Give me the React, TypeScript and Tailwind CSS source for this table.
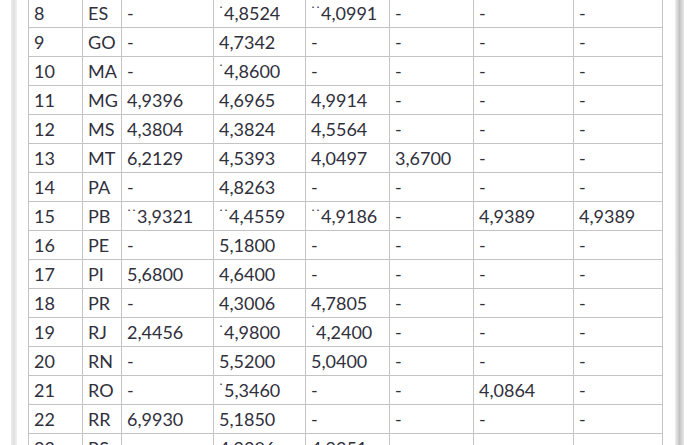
import React from 'react';

type Row = [string, string, ...string[]];

// '*' prefix = one mark, '**' = two marks, shown as small raised dots
const rows: Row[] = [
  ['8', 'ES', '-', '*4,8524', '**4,0991', '-', '-', '-'],
  ['9', 'GO', '-', '4,7342', '-', '-', '-', '-'],
  ['10', 'MA', '-', '*4,8600', '-', '-', '-', '-'],
  ['11', 'MG', '4,9396', '4,6965', '4,9914', '-', '-', '-'],
  ['12', 'MS', '4,3804', '4,3824', '4,5564', '-', '-', '-'],
  ['13', 'MT', '6,2129', '4,5393', '4,0497', '3,6700', '-', '-'],
  ['14', 'PA', '-', '4,8263', '-', '-', '-', '-'],
  ['15', 'PB', '**3,9321', '**4,4559', '**4,9186', '-', '4,9389', '4,9389'],
  ['16', 'PE', '-', '5,1800', '-', '-', '-', '-'],
  ['17', 'PI', '5,6800', '4,6400', '-', '-', '-', '-'],
  ['18', 'PR', '-', '4,3006', '4,7805', '-', '-', '-'],
  ['19', 'RJ', '2,4456', '*4,9800', '*4,2400', '-', '-', '-'],
  ['20', 'RN', '-', '5,5200', '5,0400', '-', '-', '-'],
  ['21', 'RO', '-', '*5,3460', '-', '-', '4,0864', '-'],
  ['22', 'RR', '6,9930', '5,1850', '-', '-', '-', '-'],
  ['23', 'RS', '-', '4,9306', '4,9351', '-', '-', '-'],
];

const widths = ['w-[54px]', 'w-[39px]', 'w-[92px]', 'w-[92px]', 'w-[84px]', 'w-[84px]', 'w-[100px]', 'w-[89px]'];

const Cell = ({ value }: { value: string }) => {
  const m = value.match(/^(\*+)(.*)$/);
  if (!m) return <>{value}</>;
  return (
    <>
      <span className="relative -top-[6px] text-[10px] font-bold tracking-[1px]">{m[1].replace(/\*/g, '˙')}</span>
      {m[2]}
    </>
  );
};

export default function App() {
  return (
    <div className="w-[692px] h-[445px] overflow-hidden bg-white flex font-['Lato',sans-serif] text-[#30303c]">
      <div className="w-[11px] shrink-0" />
      <div className="w-[6px] shrink-0 bg-gradient-to-r from-[#ececec] via-[#e0e0e0] to-[#f2f2f2]" />
      <div className="w-[11px] shrink-0" />
      <div className="w-[634px] shrink-0 -mt-[2px]">
        <table className="w-full table-fixed border-collapse text-[18px] leading-none">
          <colgroup>
            {widths.map((w, i) => (
              <col key={i} className={w} />
            ))}
          </colgroup>
          <tbody>
            {rows.map(r => (
              <tr key={r[0]} className="h-[29px]">
                {r.map((v, i) => (
                  <td key={i} className="border border-[#c4c4c4] px-[5px] whitespace-nowrap">
                    <Cell value={v} />
                  </td>
                ))}
              </tr>
            ))}
          </tbody>
        </table>
      </div>
      <div className="w-[13px] shrink-0" />
      <div className="w-[9px] shrink-0 bg-gradient-to-r from-[#f0f0f0] via-[#c2c2c2] to-[#e8e8e8]" />
      <div className="flex-1" />
    </div>
  );
}
